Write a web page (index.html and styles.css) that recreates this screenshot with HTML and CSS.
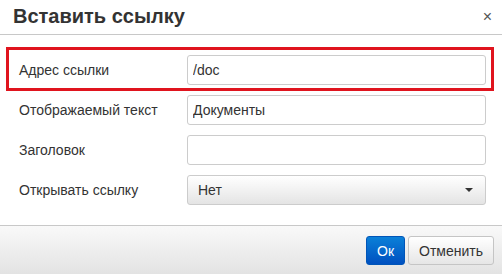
FILE: index.html
```html
<!DOCTYPE html>
<html lang="ru">
<head>
    <meta charset="UTF-8">
    <title>Вставить ссылку</title>
    <link rel="stylesheet" href="styles.css">
</head>
<body>
  <div class="dialog">
    <div class="dialog-header">
      <h3>Вставить ссылку</h3>
      <span class="close">&times;</span>
    </div>

    <div class="dialog-body">
      <div class="row row-highlight">
        <label>Адрес ссылки</label>
        <input type="text" value="/doc">
      </div>
      <div class="row">
        <label>Отображаемый текст</label>
        <input type="text" value="Документы">
      </div>
      <div class="row">
        <label>Заголовок</label>
        <input type="text" value="">
      </div>
      <div class="row">
        <label>Открывать ссылку</label>
        <div class="select">
          <span>Нет</span>
          <span class="caret"></span>
        </div>
      </div>
    </div>

    <div class="dialog-footer">
      <button class="btn btn-primary">Ок</button>
      <button class="btn">Отменить</button>
    </div>
  </div>
</body>
</html>
```

FILE: styles.css
```css
*{
    margin: 0;
    padding: 0;
    box-sizing: border-box;
}

body{
    background: #fff;
    font-family: "Liberation Sans", Arial, sans-serif;
    font-size: 14px;
    color: #333;
}

.dialog{
    width: 502px;
    height: 274px;
    display: flex;
    flex-direction: column;
    background: #fff;
}

.dialog-header{
    height: 35px;
    border-bottom: 1px solid #c8c8c8;
    display: flex;
    align-items: center;
    justify-content: space-between;
    padding: 0 10px 1px 13px;
}

.dialog-header h3{
    font-size: 20px;
    font-weight: bold;
    color: #333;
}

.close{
    font-size: 16px;
    color: #555;
    line-height: 1;
}

.dialog-body{
    flex: 1;
    padding: 12px 8px 0 6px;
}

.row{
    display: grid;
    grid-template-columns: 168px 1fr;
    align-items: center;
    padding: 0 8px 0 13px;
    margin-bottom: 10px;
}

.row-highlight{
    border: 3px solid #e0141e;
    padding: 5px 5px 3px 10px;
    margin-bottom: 4px;
}

.row label{
    color: #333;
}

.row input{
    height: 30px;
    border: 1px solid #ccc;
    border-radius: 3px;
    padding: 0 5px;
    font-family: inherit;
    font-size: 14px;
    color: #333;
}

.select{
    height: 30px;
    border: 1px solid #ccc;
    border-radius: 3px;
    padding: 0 12px 0 10px;
    display: flex;
    align-items: center;
    justify-content: space-between;
    background: linear-gradient(#fff, #e4e4e4);
}

.caret{
    width: 0;
    height: 0;
    border-left: 4px solid transparent;
    border-right: 4px solid transparent;
    border-top: 4px solid #333;
}

.dialog-footer{
    height: 49px;
    border-top: 1px solid #c8c8c8;
    background: linear-gradient(#f9f9f9, #e3e3e3);
    display: flex;
    justify-content: flex-end;
    align-items: flex-start;
    gap: 3px;
    padding: 10px 8px 0 0;
}

.btn{
    height: 29px;
    padding: 0 10px;
    border: 1px solid #c5c5c5;
    border-radius: 3px;
    background: linear-gradient(#fff, #e6e6e6);
    font-family: inherit;
    font-size: 14px;
    color: #333;
}

.btn-primary{
    width: 39px;
    padding: 0;
    border-color: #0055b8;
    background: linear-gradient(#0a80d8, #0050c0);
    color: #fff;
}
```
